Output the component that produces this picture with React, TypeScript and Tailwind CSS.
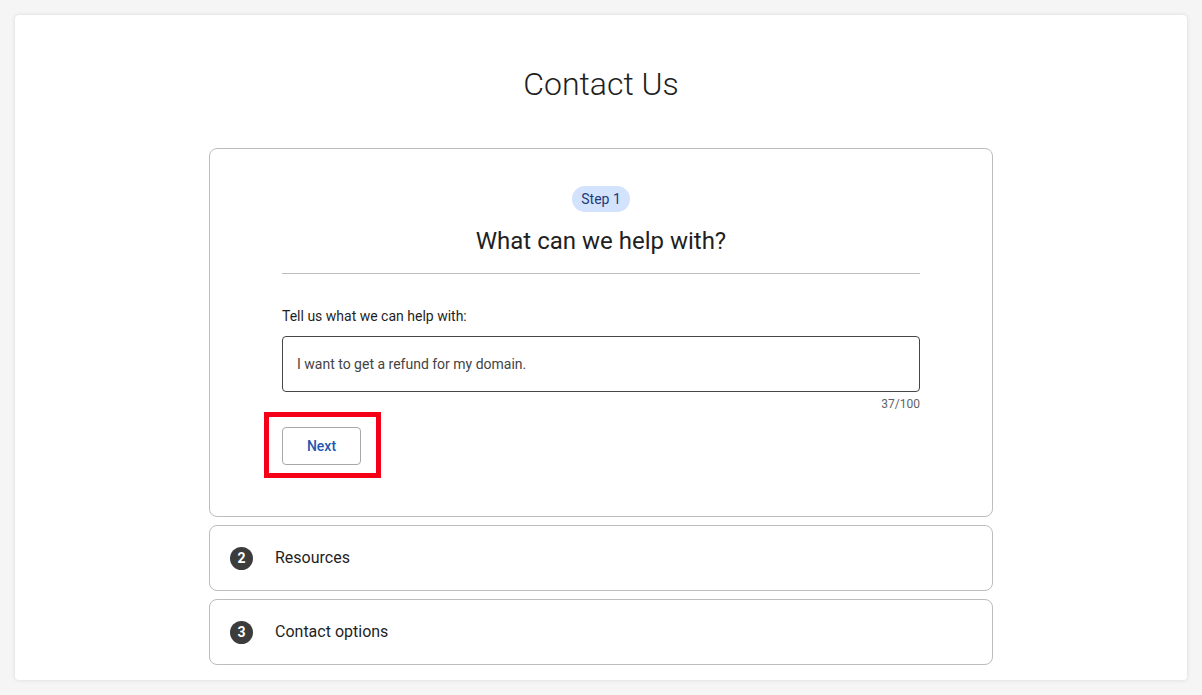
import React from 'react';

const font = { fontFamily: 'Roboto, "Open Sans", Arial, sans-serif' };

const StepRow: React.FC<{ n: number; label: string }> = ({ n, label }) => (
  <div className="flex h-[66px] w-full items-center gap-[22px] rounded-lg border border-[#bdbdbd] px-[20px]">
    <span className="flex h-[23px] w-[23px] items-center justify-center rounded-full bg-[#3c3c3c] text-[14px] font-bold text-white">
      {n}
    </span>
    <span className="text-[16px] text-[#1f1f1f]">{label}</span>
  </div>
);

export default function App() {
  return (
    <div className="min-h-screen bg-[#f5f5f5] p-[15px]" style={font}>
      <div className="flex h-[665px] flex-col items-center rounded-sm bg-white pt-[49px] shadow-[0_0_4px_rgba(0,0,0,0.12)]">
        <h1 className="text-[32px] leading-[40px] font-light text-[#1f1f1f]">Contact Us</h1>

        <div className="mt-[44px] flex w-[784px] flex-col gap-2">
          {/* step 1 */}
          <div className="flex flex-col items-center rounded-lg border border-[#bdbdbd] pt-[37px] pb-[51px]">
            <span className="flex h-[26px] items-center rounded-full bg-[#d3e3fd] px-[9px] text-[14px] text-[#1e3a78]">
              Step 1
            </span>
            <h2 className="mt-[13px] text-[24px] leading-[32px] text-[#1f1f1f]">What can we help with?</h2>

            <div className="w-[638px]">
              <div className="mt-[16px] h-px bg-[#bdbdbd]" />
              <label className="mt-[32px] block text-[14px] leading-[20px] text-[#1f1f1f]">
                Tell us what we can help with:
              </label>
              <div className="mt-[10px] flex h-[56px] items-center rounded border border-[#444746] px-[14px] text-[14px] text-[#444]">
                I want to get a refund for my domain.
              </div>
              <div className="mt-[4px] text-right text-[12px] leading-[16px] text-[#5f6368]">37/100</div>

              <div className="relative mt-[15px] w-fit">
                <button className="h-[38px] w-[79px] rounded border border-[#a8a8a8] text-[14px] font-medium text-[#2457b0]">
                  Next
                </button>
                <div className="pointer-events-none absolute top-[-15px] left-[-18px] h-[66px] w-[117px] border-[5px] border-[#f50016]" />
              </div>
            </div>
          </div>

          <StepRow n={2} label="Resources" />
          <StepRow n={3} label="Contact options" />
        </div>
      </div>
    </div>
  );
}
